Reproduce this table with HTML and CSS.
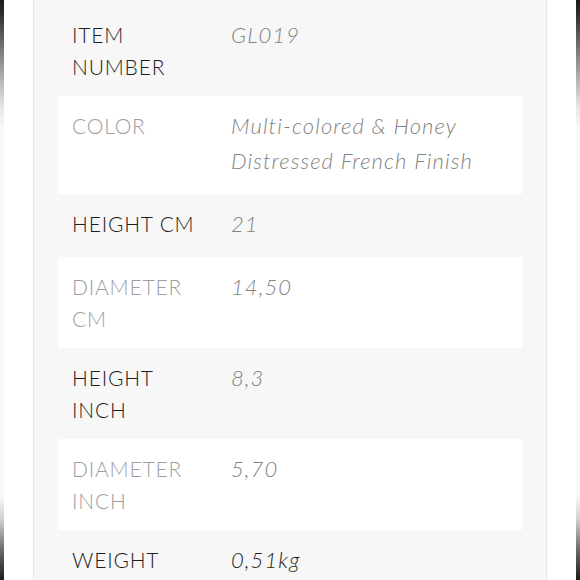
FILE: index.html
```html
<!DOCTYPE html>
<html lang="en">
<head>
<meta charset="utf-8">
<title>Product specifications</title>
<link rel="stylesheet" href="styles.css">
</head>
<body>
<div class="frame">
  <div class="edge"></div>
  <div class="gutter"></div>
  <div class="panel">
    <div class="specs">
      <div class="row alt">
        <div class="label">Item<br>number</div>
        <div class="value">GL019</div>
      </div>
      <div class="row">
        <div class="label">Color</div>
        <div class="value">Multi-colored &amp; Honey Distressed French Finish</div>
      </div>
      <div class="row alt">
        <div class="label">Height cm</div>
        <div class="value">21</div>
      </div>
      <div class="row">
        <div class="label">Diameter<br>cm</div>
        <div class="value">14,50</div>
      </div>
      <div class="row alt">
        <div class="label">Height<br>inch</div>
        <div class="value">8,3</div>
      </div>
      <div class="row">
        <div class="label">Diameter<br>inch</div>
        <div class="value">5,70</div>
      </div>
      <div class="row alt">
        <div class="label">Weight</div>
        <div class="value strong">0,51kg</div>
      </div>
    </div>
  </div>
  <div class="gutter"></div>
  <div class="edge"></div>
</div>
</body>
</html>
```
FILE: styles.css
```css
html, body {
  margin: 0;
  padding: 0;
  background: #ffffff;
  height: 100%;
  overflow: hidden;
}
.frame {
  display: flex;
  height: 580px;
  width: 580px;
  font-family: Lato, "Open Sans", sans-serif;
}
.edge {
  width: 4px;
  flex: 0 0 4px;
  background: linear-gradient(to bottom, #1c1c1c 0px, #2a2a2a 12px, #8e8e8e 60px, #e4e4e4 105px, #fafafa 130px, #fafafa 495px, #cfcfcf 520px, #6a6a6a 550px, #1c1c1c 580px);
}
.gutter {
  flex: 0 0 29px;
  background: #ffffff;
}
.panel {
  flex: 1;
  background: #f7f7f7;
  border-left: 1px solid #e6e6e6;
  border-right: 1px solid #e6e6e6;
  padding: 5px 24px 0 24px;
}
.specs {
  display: flex;
  flex-direction: column;
}
.row {
  display: grid;
  grid-template-columns: 159px 1fr;
  padding: 14px 14px;
  background: #ffffff;
  align-items: start;
}
.row.alt {
  background: #f7f7f7;
}
.label {
  font-size: 21px;
  font-weight: 300;
  line-height: 31.5px;
  text-transform: uppercase;
  letter-spacing: 0.8px;
  color: #9e9e9e;
}
.row.alt .label {
  color: #1e1e1e;
}
.value {
  font-size: 22px;
  font-weight: 300;
  font-style: italic;
  line-height: 35px;
  margin-top: -2px;
  margin-bottom: 2px;
  color: #828282;
  letter-spacing: 1.1px;
}
.value.strong {
  color: #1e1e1e;
}
```
